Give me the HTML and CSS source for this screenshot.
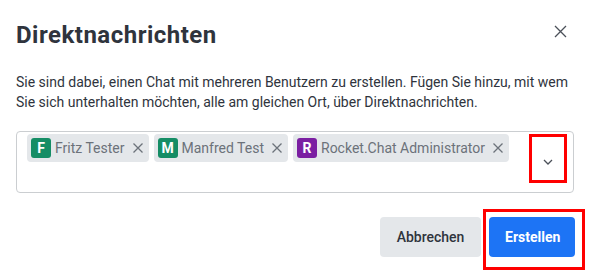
FILE: index.html
```html
<!DOCTYPE html>
<html lang="de">
<head>
<meta charset="utf-8">
<link rel="stylesheet" href="styles.css">
</head>
<body>
<div class="modal">
  <div class="header">
    <h1 class="title">Direktnachrichten</h1>
    <button class="close" aria-label="Schließen">
      <svg width="13" height="13" viewBox="0 0 13 13"><path d="M1 1L12 12M12 1L1 12" stroke="#4b5059" stroke-width="1.3" fill="none"/></svg>
    </button>
  </div>
  <p class="desc">Sie sind dabei, einen Chat mit mehreren Benutzern zu erstellen. Fügen Sie hinzu, mit wem Sie sich unterhalten möchten, alle am gleichen Ort, über Direktnachrichten.</p>
  <div class="field">
    <div class="chips">
      <span class="chip"><span class="avatar green">F</span><span class="name">Fritz Tester</span><svg class="x" width="10" height="10" viewBox="0 0 10 10"><path d="M0.5 0.5L9.5 9.5M9.5 0.5L0.5 9.5" stroke="#6c727a" stroke-width="1.3" fill="none"/></svg></span>
      <span class="chip"><span class="avatar green">M</span><span class="name">Manfred Test</span><svg class="x" width="10" height="10" viewBox="0 0 10 10"><path d="M0.5 0.5L9.5 9.5M9.5 0.5L0.5 9.5" stroke="#6c727a" stroke-width="1.3" fill="none"/></svg></span>
      <span class="chip"><span class="avatar purple">R</span><span class="name">Rocket.Chat Administrator</span><svg class="x" width="10" height="10" viewBox="0 0 10 10"><path d="M0.5 0.5L9.5 9.5M9.5 0.5L0.5 9.5" stroke="#6c727a" stroke-width="1.3" fill="none"/></svg></span>
    </div>
    <div class="toggle">
      <svg width="10" height="6" viewBox="0 0 10 6"><path d="M1 1L5 5L9 1" stroke="#4b5059" stroke-width="1.3" fill="none"/></svg>
    </div>
    <span class="mark mark-toggle"></span>
  </div>
  <div class="footer">
    <button class="btn secondary">Abbrechen</button>
    <div class="primary-wrap">
      <button class="btn primary">Erstellen</button>
      <span class="mark mark-btn"></span>
    </div>
  </div>
</div>
</body>
</html>
```
FILE: styles.css
```css
* { box-sizing: border-box; }
html, body { margin: 0; padding: 0; background: #fff; }
body {
  font-family: Roboto, "Noto Sans", sans-serif;
  color: #2f343d;
  width: 596px;
  height: 276px;
  overflow: hidden;
}
.modal {
  padding: 19px 22px 0 16px;
}
.header {
  display: flex;
  align-items: center;
  justify-content: space-between;
  height: 32px;
}
.title {
  margin: 0;
  font-size: 24px;
  letter-spacing: 0.5px;
  line-height: 32px;
  font-weight: 700;
  color: #2f343d;
}
.close {
  border: 0;
  background: none;
  padding: 0;
  width: 13px;
  height: 13px;
  margin-right: 7px;
  margin-top: -8px;
  display: flex;
}
.desc {
  margin: 21px 0 0 0;
  font-size: 14px;
  line-height: 20px;
  color: #2f343d;
}
.field {
  position: relative;
  margin-top: 19px;
  height: 62px;
  border: 1px solid #cbced1;
  border-radius: 4px;
  display: flex;
  align-items: flex-start;
  padding: 2px 0 0 10px;
}
.chips {
  display: flex;
  flex-wrap: wrap;
  gap: 5px;
  flex: 1;
}
.chip {
  display: inline-flex;
  align-items: center;
  height: 28px;
  background: #e4e7ea;
  border-radius: 4px;
  padding: 0 6px 0 4px;
  font-size: 14px;
  color: #6c727a;
}
.avatar {
  width: 20px;
  height: 20px;
  border-radius: 3px;
  color: #fff;
  font-weight: 700;
  font-size: 14px;
  display: inline-flex;
  align-items: center;
  justify-content: center;
  margin-right: 4px;
}
.green { background: #158d65; }
.purple { background: #7b1fa2; }
.x { margin-left: 8px; display: block; }
.toggle {
  width: 38px;
  height: 49px;
  margin-right: 6px;
  margin-top: 1px;
  display: flex;
  align-items: center;
  justify-content: center;
  padding-top: 5px;
}
.mark {
  position: absolute;
  border: 3px solid #ff0000;
  pointer-events: none;
}
.mark-toggle {
  right: 6px;
  top: 2px;
  width: 38px;
  height: 49px;
}
.footer {
  display: flex;
  justify-content: flex-end;
  gap: 8px;
  margin-top: 24px;
}
.btn {
  height: 40px;
  border: 0;
  border-radius: 4px;
  font-family: Roboto, "Noto Sans", sans-serif;
  font-size: 14px;
  padding: 0 16px;
}
.secondary {
  width: 101px;
  background: #e4e7ea;
  color: #2f343d;
  font-weight: 500;
}
.primary-wrap { position: relative; margin-right: -1px; }
.primary {
  width: 86px;
  background: #1d74f5;
  color: #fff;
  font-weight: 700;
}
.mark-btn {
  left: -6px;
  top: -8px;
  right: -10px;
  bottom: -13px;
}
```
